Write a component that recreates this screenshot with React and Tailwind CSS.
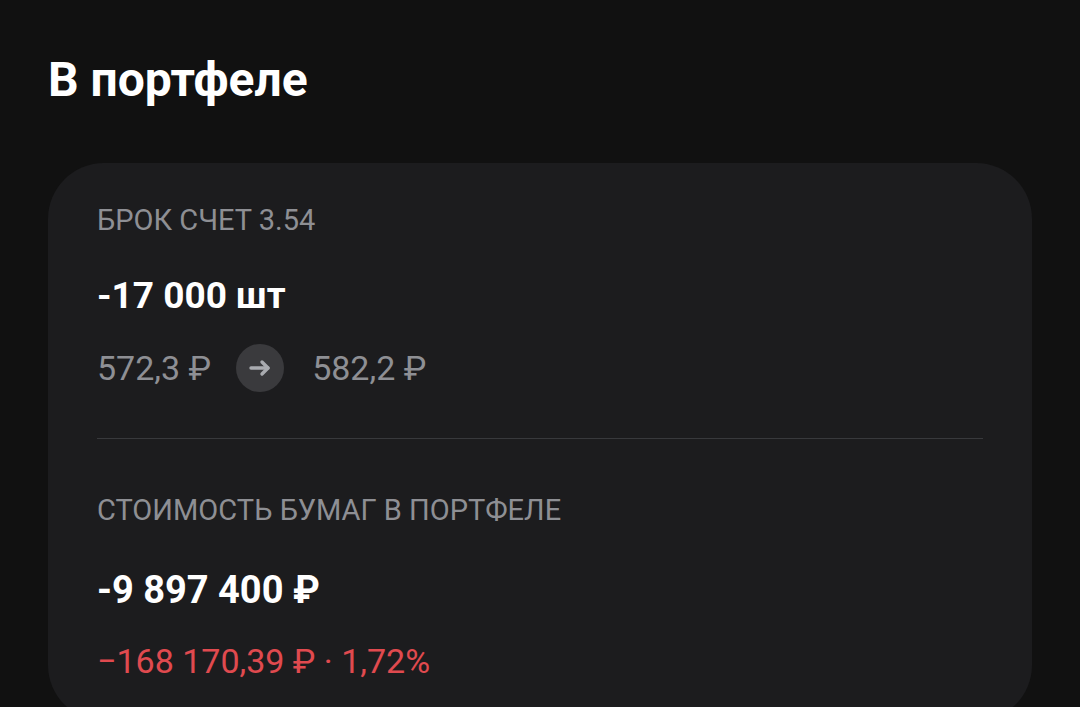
import React from 'react';

const font = { fontFamily: 'Roboto, "Noto Sans", sans-serif' };

const Arrow = () => (
  <svg width="24" height="24" viewBox="0 0 24 24" fill="none" stroke="#a9abb0" strokeWidth="3.4" strokeLinecap="round" strokeLinejoin="round">
    <path d="M3 12h17" />
    <path d="M14 6l6 6-6 6" />
  </svg>
);

export default function App() {
  return (
    <div className="min-h-screen bg-[#111111] px-12 pt-[52px] overflow-hidden" style={font}>
      <h1 className="text-white text-[48px] leading-[56px] font-bold">В портфеле</h1>

      <div className="mt-[55px] rounded-[56px] bg-[#1c1c1e] px-[49px] pt-[39px] pb-10">
        <div className="text-[#8e8f94] text-[29px] leading-[36px]">БРОК СЧЕТ 3.54</div>
        <div className="mt-9 text-white text-[37px] leading-[44px] font-bold">-17 000 шт</div>
        <div className="mt-[26px] flex items-center h-12 text-[#8e8f94] text-[34px]">
          <span>572,3 ₽</span>
          <span className="ml-[25px] mr-[28px] w-12 h-12 rounded-full bg-[#3a3a3d] flex items-center justify-center">
            <Arrow />
          </span>
          <span>582,2 ₽</span>
        </div>
        <div className="mt-[46px] h-px bg-[#38393c]" />

        <div className="mt-[53px] text-[#8e8f94] text-[29px] leading-[36px]">СТОИМОСТЬ БУМАГ В ПОРТФЕЛЕ</div>
        <div className="mt-10 text-white text-[38px] leading-[44px] font-bold">-9 897 400 ₽</div>
        <div className="mt-[29px] text-[#e04a4f] text-[34px] leading-[40px]">−168 170,39 ₽ · 1,72%</div>
      </div>
    </div>
  );
}
